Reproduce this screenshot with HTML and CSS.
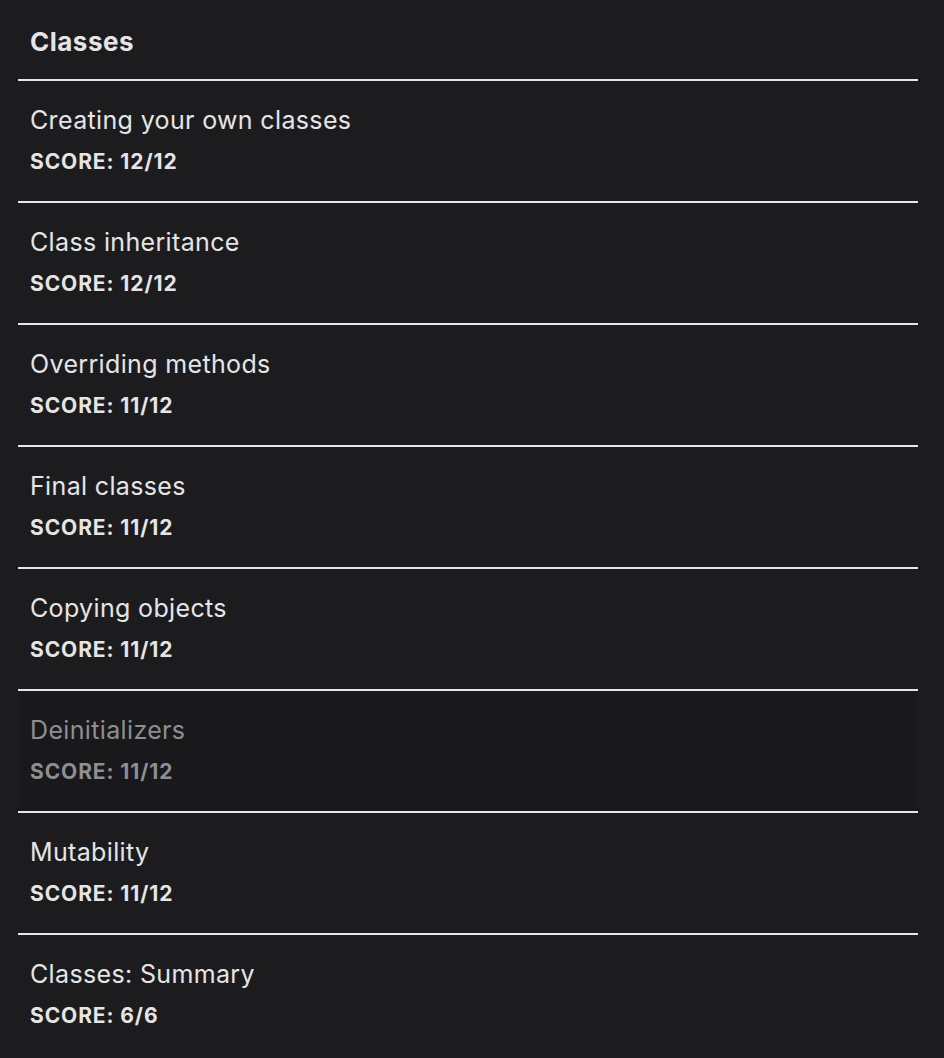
FILE: index.html
```html
<!DOCTYPE html>
<html>
<head>
<meta charset="utf-8">
<link rel="stylesheet" href="styles.css">
</head>
<body>
<div class="panel">
  <div class="header">Classes</div>
  <ul class="list">
    <li class="row"><div class="title">Creating your own classes</div><div class="score">SCORE: 12/12</div></li>
    <li class="row"><div class="title">Class inheritance</div><div class="score">SCORE: 12/12</div></li>
    <li class="row"><div class="title">Overriding methods</div><div class="score">SCORE: 11/12</div></li>
    <li class="row"><div class="title">Final classes</div><div class="score">SCORE: 11/12</div></li>
    <li class="row"><div class="title">Copying objects</div><div class="score">SCORE: 11/12</div></li>
    <li class="row dim"><div class="title">Deinitializers</div><div class="score">SCORE: 11/12</div></li>
    <li class="row"><div class="title">Mutability</div><div class="score">SCORE: 11/12</div></li>
    <li class="row"><div class="title">Classes: Summary</div><div class="score">SCORE: 6/6</div></li>
  </ul>
</div>
</body>
</html>
```
FILE: styles.css
```css
html, body {
  margin: 0;
  padding: 0;
  background: #1c1c1e;
  font-family: Inter, "Noto Sans", sans-serif;
  color: #e5e5e7;
}
.panel {
  margin: 0 26px 0 18px;
  width: 900px;
}
.header {
  height: 81px;
  box-sizing: border-box;
  padding: 26px 12px 0;
  font-size: 26px;
  font-weight: 700;
  letter-spacing: 0.5px;
  line-height: 32px;
  border-bottom: 2px solid #e5e5ea;
}
.list {
  list-style: none;
  margin: 0;
  padding: 0;
}
.row {
  height: 122px;
  box-sizing: border-box;
  padding: 24px 12px 0;
  border-bottom: 2px solid #e5e5ea;
}
.row:last-child {
  border-bottom: none;
}
.title {
  font-size: 25px;
  line-height: 30px;
  font-weight: 400;
  letter-spacing: 0.35px;
}
.score {
  margin-top: 13px;
  font-size: 21px;
  font-weight: 700;
  line-height: 28px;
  letter-spacing: 0.9px;
}
.dim {
  background: #19191b;
  color: #8e8e93;
}
```
